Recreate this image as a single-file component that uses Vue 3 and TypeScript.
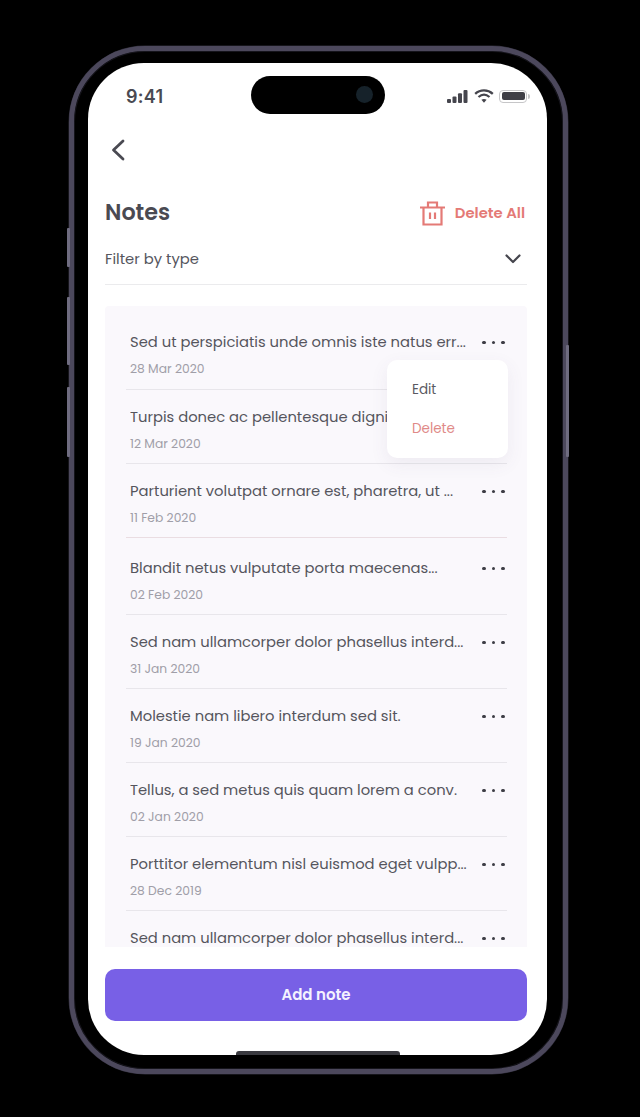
<script setup lang="ts">
interface Note { text: string; date: string; cls?: string }
const notes: Note[] = [
  { text: 'Sed ut perspiciatis unde omnis iste natus err...', date: '28 Mar 2020' },
  { text: 'Turpis donec ac pellentesque dignissim', date: '12 Mar 2020' },
  { text: 'Parturient volutpat ornare est, pharetra, ut ...', date: '11 Feb 2020', cls: 'pink' },
  { text: 'Blandit netus vulputate porta maecenas...', date: '02 Feb 2020', cls: 'gap' },
  { text: 'Sed nam ullamcorper dolor phasellus interd...', date: '31 Jan 2020' },
  { text: 'Molestie nam libero interdum sed sit.', date: '19 Jan 2020' },
  { text: 'Tellus, a sed metus quis quam lorem a conv.', date: '02 Jan 2020' },
  { text: 'Porttitor elementum nisl euismod eget vulpp...', date: '28 Dec 2019' },
  { text: 'Sed nam ullamcorper dolor phasellus interd...', date: '' },
]
</script>

<template>
  <main class="stage">
    <div class="phone">
      <i class="btn b1"></i><i class="btn b2"></i><i class="btn b3"></i><i class="btn b4"></i>
      <section class="screen">
        <div class="island"><span class="camera"></span></div>
        <header class="status">
          <span class="time">9:41</span>
          <span class="status-icons">
            <svg width="21" height="13" viewBox="0 0 21 13"><rect x="0" y="9" width="4" height="4" rx="1"/><rect x="5.5" y="6.5" width="4" height="6.5" rx="1"/><rect x="11" y="3.2" width="4" height="9.8" rx="1"/><rect x="16.5" y="0" width="4" height="13" rx="1"/></svg>
            <svg width="20" height="14" viewBox="0 0 20 14" fill="none" stroke="#45454d" stroke-width="2.3"><path d="M1.2 4.8C6.2 .2 13.8 .2 18.8 4.8"/><path d="M4.5 8C8 5 12 5 15.5 8"/><path d="M10 13.8 7.4 10.8c1.6-1.1 3.6-1.1 5.2 0z" fill="#45454d" stroke="none"/></svg>
            <span class="battery"><span></span></span>
          </span>
        </header>
        <button class="back" aria-label="Back">
          <svg width="16" height="24" viewBox="0 0 16 24" fill="none" stroke="#4a4a52" stroke-width="2.8" stroke-linecap="round" stroke-linejoin="round"><path d="M13 3 3.5 12l9.5 9"/></svg>
        </button>
        <div class="title-row">
          <h1>Notes</h1>
          <button class="delete-all">
            <svg width="25" height="25" viewBox="0 0 25 25" fill="none" stroke="#e47a76" stroke-width="2.2"><path d="M0 6.5h25"/><path d="M8 6.5V1.5h9v5"/><path d="M3.5 6.5v17h18v-17"/><path d="M10 11.5v6.5M15 11.5v6.5"/></svg>
            <span>Delete All</span>
          </button>
        </div>
        <div class="filter">
          <span>Filter by type</span>
          <svg width="16" height="10" viewBox="0 0 16 10" fill="none" stroke="#45454d" stroke-width="2.2" stroke-linecap="round" stroke-linejoin="round"><path d="M1.5 1.5 8 8l6.5-6.5"/></svg>
        </div>
        <div class="panel">
          <article v-for="(n, i) in notes" :key="i" class="note" :class="n.cls">
            <div class="note-main">
              <p class="note-text">{{ n.text }}</p>
              <span class="dots"><i></i><i></i><i></i></span>
            </div>
            <time v-if="n.date">{{ n.date }}</time>
          </article>
          <div class="menu">
            <span>Edit</span>
            <span class="danger">Delete</span>
          </div>
        </div>
        <button class="add">Add note</button>
        <div class="home"></div>
      </section>
    </div>
  </main>
</template>

<style>
html, body { margin: 0; background: #000; }
</style>

<style scoped>
.stage {
  width: 640px;
  height: 1117px;
  background: #000;
  padding: 46px 0 0 69px;
  box-sizing: border-box;
  overflow: hidden;
  font-family: Poppins, Inter, "Liberation Sans", sans-serif;
}
.phone {
  position: relative;
  width: 499px;
  height: 1028px;
  box-sizing: border-box;
  border: 5px solid #4c485c;
  border-radius: 76px;
  box-shadow: inset 0 0 0 1px #15141b, 0 0 0 .5px #2c2a36;
  padding: 12px 16px 14px 14px;
  background: #000;
}
.btn { position: absolute; width: 3px; background: #6f6c80; border-radius: 1px; }
.b1 { left: -7px; top: 177px; height: 39px; }
.b2 { left: -7px; top: 246px; height: 68px; }
.b3 { left: -7px; top: 336px; height: 70px; }
.b4 { right: -6px; top: 294px; height: 112px; }
.screen {
  position: relative;
  height: 992px;
  background: #fff;
  border-radius: 56px;
  overflow: hidden;
  padding: 0 20px 0 17px;
  box-sizing: border-box;
  display: flex;
  flex-direction: column;
  color: #4a4a52;
}
.island {
  position: absolute;
  left: 163px;
  top: 13px;
  width: 134px;
  height: 38px;
  border-radius: 19px;
  background: #000;
}
.camera {
  position: absolute;
  right: 12px;
  top: 10px;
  width: 17px;
  height: 17px;
  border-radius: 50%;
  background: #16222a;
}
.status {
  height: 66px;
  flex: none;
  display: flex;
  justify-content: space-between;
  align-items: flex-end;
  padding: 0 0 0 21px;
  margin-right: -2px;
  box-sizing: border-box;
}
.time { font-size: 18px; font-weight: 600; line-height: 24px; margin-bottom: 20px; letter-spacing: .3px; font-family: Inter, sans-serif; }
.status-icons { display: flex; align-items: center; gap: 6px; margin-bottom: 26px; fill: #45454d; }
.battery {
  position: relative;
  width: 28px;
  height: 13px;
  margin-right: 2px;
  margin-left: -1px;
  box-sizing: border-box;
  border: 1px solid #c6c6c8;
  border-radius: 4px;
  padding: 1.5px;
  display: flex;
}
.battery::after {
  content: "";
  position: absolute;
  right: -3.5px;
  top: 3px;
  width: 2px;
  height: 5px;
  border-radius: 0 2px 2px 0;
  background: #c6c6c8;
}
.battery span { flex: 1; background: #3f3f46; border-radius: 2px; }
.back {
  border: 0;
  background: none;
  padding: 0;
  margin: 9px 0 0 5px;
  width: 16px;
  height: 24px;
  flex: none;
  display: block;
}
.back svg { display: block; }
.title-row {
  display: flex;
  align-items: center;
  justify-content: space-between;
  margin-top: 35px;
  height: 32px;
  flex: none;
}
h1 { margin: 0; font-size: 22.3px; font-weight: 600; color: #4a4a52; line-height: 32px; }
.delete-all {
  display: flex;
  align-items: center;
  gap: 10px;
  border: 0;
  background: none;
  padding: 0;
  margin-right: 2px;
  font: inherit;
  font-size: 14.8px;
  font-weight: 600;
  color: #e47a76;
}
.filter {
  display: flex;
  justify-content: space-between;
  align-items: center;
  height: 32px;
  margin-top: 14px;
  padding-right: 6px;
  padding-bottom: 9px;
  border-bottom: 1px solid #ebebed;
  font-size: 14.8px;
  color: #56565e;
  flex: none;
}
.panel {
  position: relative;
  margin-top: 21px;
  height: 641px;
  flex: none;
  overflow: hidden;
  background: #faf8fc;
  padding: 0 20px 0 21px;
  box-sizing: border-box;
  border-radius: 4px 4px 0 0;
}
.note {
  height: 74px;
  box-sizing: border-box;
  padding: 15px 0 0 4px;
  border-bottom: 1px solid #e8e6eb;
}
.note:first-child { height: 84px; padding-top: 24px; }
.note.gap { height: 77px; padding-top: 18px; }
.note.pink { border-bottom-color: #eadde2; }
.note-main { display: flex; align-items: center; justify-content: space-between; height: 24px; }
.note-text {
  margin: 0;
  font-size: 14.75px;
  line-height: 24px;
  color: #55555d;
  white-space: nowrap;
  overflow: hidden;
  width: 340px;
}
.dots { display: flex; gap: 6px; padding-right: 2.5px; flex: none; margin-top: 1px; }
.dots i { width: 3.5px; height: 3.5px; border-radius: 50%; background: #3d3d45; }
time { display: block; font-size: 12.3px; line-height: 18px; margin-top: 5.5px; color: #a09ea8; }
.menu {
  position: absolute;
  left: 282px;
  top: 54px;
  width: 121px;
  height: 98px;
  box-sizing: border-box;
  background: #fff;
  border-radius: 10px;
  box-shadow: 0 6px 18px rgba(90, 80, 120, .08);
  display: flex;
  flex-direction: column;
  gap: 19px;
  padding: 20px 0 0 25px;
  font-size: 13.5px;
  line-height: 20px;
  color: #5a5a62;
}
.danger { color: #e08a88; }
.add {
  flex: none;
  margin-top: 22px;
  height: 52px;
  border: 0;
  border-radius: 10px;
  background: #7860e6;
  color: #f4f2ff;
  font: inherit;
  font-size: 15px;
  font-weight: 600;
  padding: 0 0 2px;
}
.home {
  position: absolute;
  left: 148px;
  bottom: 0;
  width: 164px;
  height: 4px;
  border-radius: 3px 3px 0 0;
  background: #3a3a40;
}
</style>
